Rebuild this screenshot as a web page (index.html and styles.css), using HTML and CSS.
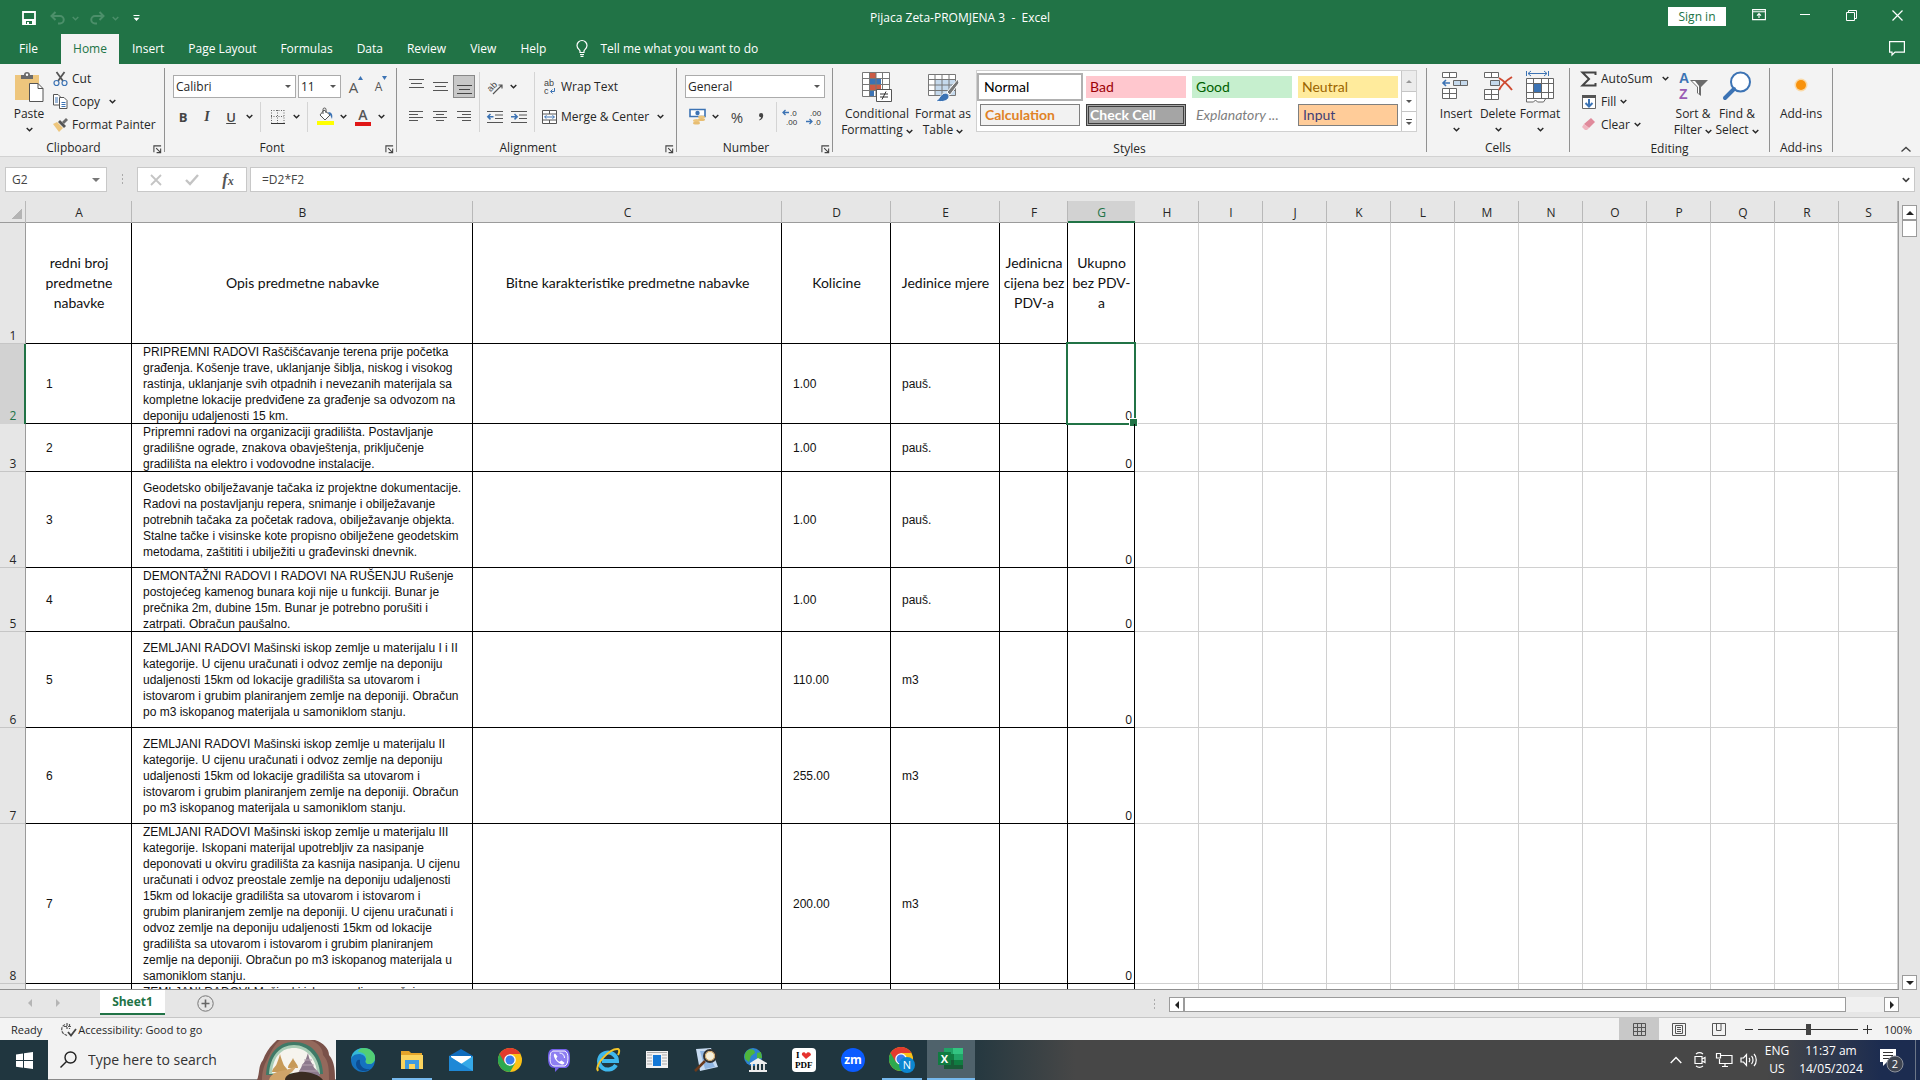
FILE: index.html
```html
<!DOCTYPE html>
<html lang="en">
  <head>
    <meta charset="UTF-8" />
    <meta name="viewport" content="width=device-width, initial-scale=1.0" />
    <title>Pijaca Zeta-PROMJENA 3 - Excel</title>
    <link rel="stylesheet" href="styles.css">
  </head>
  <body>
    <svg class="defs" width="0" height="0" aria-hidden="true">
      <symbol id="chev" viewBox="0 0 7 5"><path d="M0.7 0.9 3.5 3.7 6.3 0.9" fill="none" stroke="currentColor" stroke-width="1.4"/></symbol>
      <symbol id="launch" viewBox="0 0 10 10"><path d="M1 8V1h8M3.500 3.500 8 8M8.500 4v4.500H4" fill="none" stroke="#444" stroke-width="1.200"/></symbol>
      <symbol id="chrome" viewBox="0 0 24 24">
        <circle cx="12" cy="12" r="12" fill="#fbc116"/>
        <path d="M12 12 1.600 6A12 12 0 0 0 12 24l5.200-9z" fill="#2da94f"/>
        <path d="M1.600 6a12 12 0 0 1 20.800 0H12L6.800 15z" fill="#e33b2e"/>
        <circle cx="12" cy="12" r="5.800" fill="#fff"/>
        <circle cx="12" cy="12" r="4.500" fill="#3b7ded"/>
      </symbol>
    </svg>

    <div class="window">
      <header class="titlebar">
        <div class="quick">
          <button aria-label="Save"><svg width="14" height="14" viewBox="0 0 14 14"><path d="M1 1h12v12H1z" fill="none" stroke="#fff" stroke-width="1.800"/><path d="M1 8h12v5H1z" fill="#fff"/><path d="M4 10h6v3H4z" fill="#217346"/><path d="M5 11h2v2H5z" fill="#fff"/></svg></button>
          <button class="faded" aria-label="Undo"><svg width="15" height="14" viewBox="0 0 15 14"><path d="M5.500 1 1.500 5l4 4M1.500 5H10a3.700 3.700 0 0 1 0 7.500H8" fill="none" stroke="#4c8f6a" stroke-width="2"/></svg><svg width="7" height="5"><use href="#chev"/></svg></button>
          <button class="faded" aria-label="Redo"><svg width="15" height="14" viewBox="0 0 15 14"><path d="M9.500 1l4 4-4 4M13.500 5H5a3.700 3.700 0 0 0 0 7.500h2" fill="none" stroke="#4c8f6a" stroke-width="2"/></svg><svg width="7" height="5"><use href="#chev"/></svg></button>
          <button aria-label="Customize Quick Access Toolbar"><svg width="7" height="7" viewBox="0 0 7 7"><path d="M0.500 0h6v1h-6zM0.500 2.800h6L3.500 6z" fill="#fff"/></svg></button>
        </div>
        <h1>Pijaca Zeta-PROMJENA 3&nbsp; -&nbsp; Excel</h1>
        <div class="caption">
          <button class="signin">Sign in</button>
          <button aria-label="Ribbon Display Options"><svg width="14" height="12" viewBox="0 0 14 12"><path d="M.6.600h12.800v10H.6zM.6 2.800h12.800M7 9V5M5 6.600 7 4.600l2 2" fill="none" stroke="#fff" stroke-width="1.100"/></svg></button>
          <button aria-label="Minimize"><svg width="10" height="10" viewBox="0 0 10 10"><path d="M0 4.500h10" stroke="#fff"/></svg></button>
          <button aria-label="Restore"><svg width="11" height="11" viewBox="0 0 11 11"><path d="M.5 2.500h8v8h-8zM2.500 2.500v-2h8v8h-2" fill="none" stroke="#fff"/></svg></button>
          <button aria-label="Close"><svg width="11" height="11" viewBox="0 0 11 11"><path d="m.5.500 10 10m0-10-10 10" stroke="#fff" stroke-width="1.200"/></svg></button>
        </div>
      </header>

      <nav class="tabs">
        <button class="file">File</button>
        <button class="active">Home</button>
        <button>Insert</button>
        <button>Page Layout</button>
        <button>Formulas</button>
        <button>Data</button>
        <button>Review</button>
        <button>View</button>
        <button>Help</button>
        <button class="tell"><svg width="12" height="17" viewBox="0 0 12 17"><path d="M4 12.500V11C3.500 9.500 1 8.500 1 5.500a5 5 0 0 1 10 0c0 3-2.500 4-3 5.500v1.500zM4 14.500h4M4.500 16.300h3" fill="none" stroke="#fff" stroke-width="1.200"/></svg>Tell me what you want to do</button>
        <button class="comment" aria-label="Comments"><svg width="16" height="15" viewBox="0 0 16 15"><path d="M.6.600h14.800v10.500H6L3 14v-2.900H.6z" fill="none" stroke="#fff" stroke-width="1.200"/></svg></button>
      </nav>

      <section class="ribbon">
        <div class="group clipboard">
          <div class="tools">
            <button class="big"><svg width="30" height="32" viewBox="0 0 30 32"><path d="M1 4h24v25H1z" fill="#eec67d"/><path d="M7 8V4h3a3 3 0 0 1 6 0h3v4z" fill="#6b6b6b"/><circle cx="13" cy="3.800" r="1.200" fill="#fff"/><path d="M15.500 12.500h8.500l5 5v13H15.500z" fill="#fff" stroke="#555"/><path d="M24 12.500v5h5" fill="none" stroke="#555"/></svg><span>Paste</span><svg width="7" height="5"><use href="#chev"/></svg></button>
            <div class="stack">
              <button><svg width="15" height="16" viewBox="0 0 15 16"><path d="M3.500 1 10 10M11.500 1 5 10" stroke="#555" stroke-width="1.800"/><circle cx="3.500" cy="12" r="2.500" fill="none" stroke="#3c73b4" stroke-width="1.200"/><circle cx="11.500" cy="12" r="2.500" fill="none" stroke="#3c73b4" stroke-width="1.200"/></svg>Cut</button>
              <button><svg width="15" height="15" viewBox="0 0 15 15"><path d="M.5.500H5l2.500 2.500v8h-7z" fill="#fff" stroke="#555"/><path d="M6.500 3.500H11l3 3v8H6.500z" fill="#fff" stroke="#555"/><path d="M2 4h3M2 6h3M2 8h3M8.500 8.500h4M8.500 10.500h4M8.500 12.500h4" stroke="#3c73b4"/></svg>Copy<svg class="gap" width="7" height="5"><use href="#chev"/></svg></button>
              <button><svg width="15" height="14" viewBox="0 0 15 14"><path d="M0 6l4-2 6 6-4 4z" fill="#eec67d"/><path d="m5 4 2-2 6 6-2 2z" fill="#555"/><path d="m9 4 4-4 2 2-4 4z" fill="#6b6b6b"/></svg>Format Painter</button>
            </div>
          </div>
          <div class="caption-row launch">Clipboard<button aria-label="Clipboard options"><svg width="9" height="9"><use href="#launch"/></svg></button></div>
        </div>

        <div class="group font">
          <div class="tools rows">
            <div class="row">
              <span class="combo wide"><select aria-label="Font"><option>Calibri</option></select></span>
              <span class="combo small"><select aria-label="Font size"><option>11</option></select></span>
              <button class="ic grow" aria-label="Increase font size">A<svg width="5" height="4" viewBox="0 0 5 4"><path d="M0 4h5L2.500 0z" fill="#3c73b4"/></svg></button>
              <button class="ic shrink" aria-label="Decrease font size">A<svg width="5" height="4" viewBox="0 0 5 4"><path d="M0 0h5L2.500 4z" fill="#3c73b4"/></svg></button>
            </div>
            <div class="row letters">
              <button class="ic letter"><b>B</b></button>
              <button class="ic letter"><i>I</i></button>
              <button class="ic letter"><u>U</u></button>
              <button class="dd" aria-label="Underline style"><svg width="7" height="5"><use href="#chev"/></svg></button>
              <span class="sep"></span>
              <button class="ic" aria-label="Borders"><svg width="14" height="14" viewBox="0 0 14 14"><path d="M.5 0v13M6.500 0v13M13 0v13M0 .5h13M0 6.500h13" stroke="#666" stroke-dasharray="1 1.500"/><path d="M0 13.500h14" stroke="#333"/></svg></button>
              <button class="dd" aria-label="Border style"><svg width="7" height="5"><use href="#chev"/></svg></button>
              <span class="sep"></span>
              <button class="ic" aria-label="Fill color"><svg width="17" height="17" viewBox="0 0 17 17"><path d="m7 2 6 5-5 5-5-5z" fill="#fff" stroke="#555"/><path d="M6 6V1.500a1.300 1.300 0 0 1 3 0V5" fill="none" stroke="#555"/><path d="M11 4c4 0 5 3 4 7-1-2-1-3-2-4z" fill="#3c73b4"/><path d="M0 13h17v4H0z" fill="#ff0"/></svg></button>
              <button class="dd" aria-label="Fill colors"><svg width="7" height="5"><use href="#chev"/></svg></button>
              <button class="ic fcolor" aria-label="Font color"><span>A</span></button>
              <button class="dd" aria-label="Font colors"><svg width="7" height="5"><use href="#chev"/></svg></button>
            </div>
          </div>
          <div class="caption-row launch">Font<button aria-label="Font options"><svg width="9" height="9"><use href="#launch"/></svg></button></div>
        </div>

        <div class="group alignment">
          <div class="tools rows">
            <div class="row">
              <button class="ic" aria-label="Top align"><svg width="15" height="15" viewBox="0 0 15 15"><path d="M0 .5h15M2 4.500h11M0 8.500h15" stroke="#555"/></svg></button>
              <button class="ic" aria-label="Middle align"><svg width="15" height="15" viewBox="0 0 15 15"><path d="M0 3.500h15M2 7.500h11M0 11.500h15" stroke="#555"/></svg></button>
              <button class="ic pressed" aria-label="Bottom align"><svg width="15" height="15" viewBox="0 0 15 15"><path d="M0 6.500h15M2 10.500h11M0 14.500h15" stroke="#444"/></svg></button>
              <span class="sep"></span>
              <button class="ic" aria-label="Orientation"><svg width="17" height="16" viewBox="0 0 17 16"><text x="1" y="11" class="ab" transform="rotate(-45 5 9)">ab</text><path d="m6 15 9-9m-3.500 0H15v3.500" fill="none" stroke="#555" stroke-width="1.200"/></svg></button>
              <button class="dd" aria-label="Orientation options"><svg width="7" height="5"><use href="#chev"/></svg></button>
              <span class="sep late"></span>
              <button class="wrap"><svg width="16" height="16" viewBox="0 0 16 16"><text x="2" y="7" class="ab">ab</text><text x="2" y="15" class="ab">c</text><path d="M12.500 9v3.500H9M10.500 10.500l-2 2 2 2" fill="none" stroke="#3c73b4"/></svg>Wrap Text</button>
            </div>
            <div class="row">
              <button class="ic" aria-label="Align left"><svg width="15" height="15" viewBox="0 0 15 15"><path d="M0 2.500h14M0 5.500h9M0 8.500h14M0 11.500h9" stroke="#555"/></svg></button>
              <button class="ic" aria-label="Center"><svg width="15" height="15" viewBox="0 0 15 15"><path d="M0 2.500h14M3 5.500h8M0 8.500h14M3 11.500h8" stroke="#555"/></svg></button>
              <button class="ic" aria-label="Align right"><svg width="15" height="15" viewBox="0 0 15 15"><path d="M0 2.500h14M5 5.500h9M0 8.500h14M5 11.500h9" stroke="#555"/></svg></button>
              <span class="sep"></span>
              <button class="ic" aria-label="Decrease indent"><svg width="16" height="14" viewBox="0 0 16 14"><path d="M0 1.500h16M8 5h8M8 8.500h8M0 12.500h16" stroke="#555"/><path d="M6.500 6.700h-6M3.500 4 .8 6.700l2.700 2.700" fill="none" stroke="#3c73b4" stroke-width="1.500"/></svg></button>
              <button class="ic" aria-label="Increase indent"><svg width="16" height="14" viewBox="0 0 16 14"><path d="M0 1.500h16M8 5h8M8 8.500h8M0 12.500h16" stroke="#555"/><path d="M0 6.700h6M3.500 4l2.700 2.700-2.700 2.700" fill="none" stroke="#3c73b4" stroke-width="1.500"/></svg></button>
              <span class="sep"></span>
              <button class="wrap"><svg width="16" height="16" viewBox="0 0 16 16"><path d="M.5 1.500h14v13H.5zM.5 5h14M.5 11h14M7.500 1.500V5M7.500 11v3.500" fill="#fff" stroke="#555"/><path d="M2.500 8h10M4.500 6.200 2.700 8l1.800 1.800M10.500 6.200 12.300 8l-1.800 1.800" fill="none" stroke="#3c73b4"/></svg>Merge &amp; Center<svg class="gap" width="7" height="5"><use href="#chev"/></svg></button>
            </div>
          </div>
          <div class="caption-row launch">Alignment<button aria-label="Alignment options"><svg width="9" height="9"><use href="#launch"/></svg></button></div>
        </div>

        <div class="group number">
          <div class="tools rows">
            <div class="row"><span class="combo full"><select aria-label="Number format"><option>General</option></select></span></div>
            <div class="row">
              <button class="ic" aria-label="Accounting format"><svg width="17" height="17" viewBox="0 0 17 17"><path d="M1 1.500h15v7H1z" fill="#fff" stroke="#3c73b4" stroke-width="1.600"/><circle cx="8.500" cy="5" r="2.200" fill="#3c73b4"/><ellipse cx="12.500" cy="9" rx="3.500" ry="1.600" fill="#eec67d"/><ellipse cx="12.500" cy="11.500" rx="3.500" ry="1.600" fill="#e7bd72"/><ellipse cx="7.500" cy="12.500" rx="3.500" ry="1.600" fill="#eec67d"/><ellipse cx="7.500" cy="15" rx="3.500" ry="1.600" fill="#e7bd72"/></svg></button>
              <button class="dd" aria-label="Accounting formats"><svg width="7" height="5"><use href="#chev"/></svg></button>
              <button class="ic percent">%</button>
              <button class="ic" aria-label="Comma style"><svg width="6" height="8" viewBox="0 0 6 8"><path d="M1 2.200a2 2 0 0 1 4.200 0C5.200 5 3.500 6.800 1.300 7.500V6.600C2.500 6 3 5.200 3 4.300A2 2 0 0 1 1 2.200z" fill="#444"/></svg></button>
              <span class="sep"></span>
              <button class="ic" aria-label="Increase decimal"><svg width="16" height="16" viewBox="0 0 16 16"><path d="M7 3.500H1M3.500 1 1 3.500 3.500 6" fill="none" stroke="#3c73b4" stroke-width="1.300"/><text x="8" y="7" class="dec">.0</text><text x="4" y="16" class="dec">.00</text></svg></button>
              <button class="ic" aria-label="Decrease decimal"><svg width="16" height="16" viewBox="0 0 16 16"><path d="M0 12.500h6M3.500 10 6 12.500 3.500 15" fill="none" stroke="#3c73b4" stroke-width="1.300"/><text x="4" y="7" class="dec">.00</text><text x="8" y="16" class="dec">.0</text></svg></button>
            </div>
          </div>
          <div class="caption-row launch">Number<button aria-label="Number options"><svg width="9" height="9"><use href="#launch"/></svg></button></div>
        </div>

        <div class="group styles">
          <div class="tools">
            <button class="big w66"><svg width="30" height="32" viewBox="0 0 30 32"><path d="M.5 1.500h27v24H.5z" fill="#fff"/><path d="M8 2h6v6H8zM8 14h11v6H8z" fill="#cc5b45"/><path d="M8 8h11v6H8zM8 20h4v5.500H8z" fill="#3c73b4"/><path d="M.5 1.500h27v24H.5zM.5 7.500h27M.5 13.500h27M.5 19.500h27M7.500 1.500v24M14 1.500v24M20.500 1.500v24" fill="none" stroke="#777"/><path d="M14.500 18.500h15v12h-15z" fill="#fff" stroke="#555"/><path d="M18 23h8M18 26h8M24 20.500l-4 8" stroke="#333"/></svg><span>Conditional<br>Formatting <svg width="7" height="5"><use href="#chev"/></svg></span></button>
            <button class="big w66"><svg width="31" height="32" viewBox="0 0 31 32"><path d="M.5 3.500h27v21H.5z" fill="#fff"/><path d="M7 9h20v15H7z" fill="#c5d9ec"/><path d="M.5 3.500h27v21H.5zM.5 8.500h27M.5 14h27M.5 19.500h27M7 3.500v21M14 3.500v21M21 3.500v21" fill="none" stroke="#777"/><path d="m30 8-11 13 3 3 9-12z" fill="#777" stroke="#fff"/><path d="M8 30c4-2 4-7 9-8 4 0 5 4 3 6-3 3-8 3-12 2z" fill="#3c73b4" stroke="#fff"/></svg><span>Format as<br>Table <svg width="7" height="5"><use href="#chev"/></svg></span></button>
            <div class="gallery">
              <div class="swatches">
                <button class="normal">Normal</button>
                <button class="bad">Bad</button>
                <button class="good">Good</button>
                <button class="neutral">Neutral</button>
                <button class="calc">Calculation</button>
                <button class="check">Check Cell</button>
                <button class="expl">Explanatory ...</button>
                <button class="input">Input</button>
              </div>
              <div class="spin">
                <button class="off" aria-label="Previous styles"><i class="tri up"></i></button>
                <button aria-label="Next styles"><i class="tri"></i></button>
                <button class="more" aria-label="More styles"><i class="tri"></i></button>
              </div>
            </div>
          </div>
          <div class="caption-row">Styles</div>
        </div>

        <div class="group cells">
          <div class="tools">
            <button class="big w42"><svg width="30" height="32" viewBox="0 0 30 32"><path d="M1.500 1.500h14v5h-14zM8.500 1.500v5M1.500 17.500h14v10h-14zM8.500 17.500v10M1.500 22.500h14" fill="#fff" stroke="#666"/><path d="M12.500 9.500h14v5h-14z" fill="#c5d9ec" stroke="#666"/><path d="M19.500 9.500v5" stroke="#666"/><path d="M9 12H2M5 9l-3 3 3 3" fill="none" stroke="#3c73b4" stroke-width="1.600"/></svg><span>Insert</span><svg width="7" height="5"><use href="#chev"/></svg></button>
            <button class="big w42"><svg width="30" height="32" viewBox="0 0 30 32"><path d="M1.500 1.500h14v5h-14zM8.500 1.500v5M1.500 18.500h14v10h-14zM8.500 18.500v10M1.500 23.500h14" fill="#fff" stroke="#666"/><path d="M7.500 9.500h9v5h-9z" fill="#c5d9ec" stroke="#666"/><path d="M16 7c5 3 9 7 13 12M29 6c-5 3-10 7-13 13" fill="none" stroke="#cf4b32" stroke-width="2"/></svg><span>Delete</span><svg width="7" height="5"><use href="#chev"/></svg></button>
            <button class="big w42"><svg width="30" height="32" viewBox="0 0 30 32"><path d="M1.500 0v5M23.500 0v5M3 2.500h19M6 0 3 2.500 6 5M19 0l3 2.500L19 5" fill="none" stroke="#3c73b4"/><path d="M1.500 7.500h27v20h-27zM1.500 12.500h27M1.500 21.500h27M8.500 7.500v20M16.500 7.500v20M23.500 7.500v20" fill="#fff" stroke="#666"/><path d="M9 13h7v8H9z" fill="#3c73b4"/><path d="M1.500 28v3h7l2-2 2 2h6l2-3" fill="#fff" stroke="#666"/></svg><span>Format</span><svg width="7" height="5"><use href="#chev"/></svg></button>
          </div>
          <div class="caption-row">Cells</div>
        </div>

        <div class="group editing">
          <div class="tools">
            <div class="stack">
              <button><svg width="16" height="16" viewBox="0 0 16 16"><path d="M14.500 4V1.500h-13L8 8l-6.500 6.500h13V12" fill="none" stroke="#444" stroke-width="2"/></svg>AutoSum<svg class="gap" width="7" height="5"><use href="#chev"/></svg></button>
              <button><svg width="16" height="16" viewBox="0 0 16 16"><path d="M1.500 1.500h13v13h-13z" fill="#fff" stroke="#666"/><path d="M1 1h14v3H1z" fill="#555"/><path d="M8 5v7.500M4.500 9 8 12.500 11.500 9" fill="none" stroke="#3c73b4" stroke-width="2"/></svg>Fill<svg width="7" height="5"><use href="#chev"/></svg></button>
              <button><svg width="16" height="16" viewBox="0 0 16 16"><path d="m10 1 4 4-6 6-5-4z" fill="#e08a9b"/><path d="m3 7 5 4-2 2H4l-3-3z" fill="#f0b6c0"/></svg>Clear<svg width="7" height="5"><use href="#chev"/></svg></button>
            </div>
            <button class="big w44"><svg width="30" height="32" viewBox="0 0 30 32"><text x="1" y="12" class="az" fill="#3c73b4">A</text><text x="1" y="28" class="az" fill="#9a5cb4">Z</text><path d="M12 9h18l-7 7v9l-4-3v-6z" fill="#6b6b6b"/><path d="m14 10 6 6v6l1 1V15l-4-5z" fill="#fff"/></svg><span>Sort &amp;<br>Filter <svg width="7" height="5"><use href="#chev"/></svg></span></button>
            <button class="big w44"><svg width="30" height="32" viewBox="0 0 30 32"><circle cx="18.500" cy="11" r="9.500" fill="#fff" stroke="#3c73b4" stroke-width="2"/><path d="M12 18 3 27" stroke="#3c73b4" stroke-width="4" stroke-linecap="round"/></svg><span>Find &amp;<br>Select <svg width="7" height="5"><use href="#chev"/></svg></span></button>
          </div>
          <div class="caption-row">Editing</div>
        </div>

        <div class="group addins">
          <div class="tools">
            <button class="big w62"><svg width="30" height="32" viewBox="0 0 30 32"><circle cx="15" cy="14" r="6.500" fill="#fbd9a5"/><circle cx="15" cy="14" r="5" fill="#f8920c"/></svg><span>Add-ins</span></button>
          </div>
          <div class="caption-row">Add-ins</div>
        </div>
        <button class="collapse" aria-label="Collapse the Ribbon"><svg width="10" height="6" viewBox="0 0 10 6"><path d="m.5 5.500 4.500-4 4.500 4" fill="none" stroke="#444" stroke-width="1.400"/></svg></button>
      </section>

      <div class="formulabar">
        <div class="namebox"><input type="text" aria-label="Name Box" value="G2"><i class="tri"></i></div>
        <span class="dots"></span>
        <div class="fx">
          <button aria-label="Cancel"><svg width="12" height="12" viewBox="0 0 12 12"><path d="m1 1 10 10m0-10L1 11" stroke="#c4c4c4" stroke-width="1.800"/></svg></button>
          <button aria-label="Enter"><svg width="14" height="12" viewBox="0 0 14 12"><path d="m1 6 4 4 8-9" fill="none" stroke="#c4c4c4" stroke-width="2.400"/></svg></button>
          <button class="fn" aria-label="Insert Function"><i>f<small>x</small></i></button>
        </div>
        <div class="formula"><input type="text" aria-label="Formula Bar" value="=D2*F2"><svg width="8" height="6" viewBox="0 0 7 5"><use href="#chev"/></svg></div>
      </div>

      <main class="sheet">
        <div class="viewport">
          <table>
            <colgroup>
              <col class="c-head"><col class="c-a"><col class="c-b"><col class="c-c"><col class="c-d"><col class="c-d"><col class="c-f"><col class="c-g">
              <col class="c-x" span="11"><col>
            </colgroup>
            <thead>
              <tr>
                <th class="corner"></th><th>A</th><th>B</th><th>C</th><th>D</th><th>E</th><th>F</th><th class="sel">G</th><th>H</th><th>I</th><th>J</th><th>K</th><th>L</th><th>M</th><th>N</th><th>O</th><th>P</th><th>Q</th><th>R</th><th>S</th>
              </tr>
            </thead>
            <tbody>
              <tr class="head">
                <th>1</th><td>redni broj<br>predmetne<br>nabavke</td><td>Opis predmetne nabavke</td><td>Bitne karakteristike predmetne nabavke</td><td>Kolicine</td><td>Jedinice mjere</td><td>Jedinicna<br>cijena bez<br>PDV-a</td><td>Ukupno<br>bez PDV-<br>a</td>
                <td></td><td></td><td></td><td></td><td></td><td></td><td></td><td></td><td></td><td></td><td></td><td></td>
              </tr>
              <tr class="l5">
                <th class="sel">2</th><td>1</td><td>PRIPREMNI RADOVI Raščišćavanje terena prije početka<br>građenja. Košenje trave, uklanjanje šiblja, niskog i visokog<br>rastinja, uklanjanje svih otpadnih i nevezanih materijala sa<br>kompletne lokacije predviđene za građenje sa odvozom na<br>deponiju udaljenosti 15 km.</td><td></td><td>1.00</td><td>pauš.</td><td></td><td class="cursor">0</td>
                <td></td><td></td><td></td><td></td><td></td><td></td><td></td><td></td><td></td><td></td><td></td><td></td>
              </tr>
              <tr class="l3">
                <th>3</th><td>2</td><td>Pripremni radovi na organizaciji gradilišta. Postavljanje<br>gradilišne ograde, znakova obavještenja, priključenje<br>gradilišta na elektro i vodovodne instalacije.</td><td></td><td>1.00</td><td>pauš.</td><td></td><td>0</td>
                <td></td><td></td><td></td><td></td><td></td><td></td><td></td><td></td><td></td><td></td><td></td><td></td>
              </tr>
              <tr class="l6">
                <th>4</th><td>3</td><td>Geodetsko obilježavanje tačaka iz projektne dokumentacije.<br>Radovi na postavljanju repera, snimanje i obilježavanje<br>potrebnih tačaka za početak radova, obilježavanje objekta.<br>Stalne tačke i visinske kote propisno obilježene geodetskim<br>metodama, zaštititi i ubilježiti u građevinski dnevnik.</td><td></td><td>1.00</td><td>pauš.</td><td></td><td>0</td>
                <td></td><td></td><td></td><td></td><td></td><td></td><td></td><td></td><td></td><td></td><td></td><td></td>
              </tr>
              <tr class="l4">
                <th>5</th><td>4</td><td>DEMONTAŽNI RADOVI I RADOVI NA RUŠENJU Rušenje<br>postojećeg kamenog bunara koji nije u funkciji. Bunar je<br>prečnika 2m, dubine 15m. Bunar je potrebno porušiti i<br>zatrpati. Obračun paušalno.</td><td></td><td>1.00</td><td>pauš.</td><td></td><td>0</td>
                <td></td><td></td><td></td><td></td><td></td><td></td><td></td><td></td><td></td><td></td><td></td><td></td>
              </tr>
              <tr class="l6">
                <th>6</th><td>5</td><td>ZEMLJANI RADOVI Mašinski iskop zemlje u materijalu I i II<br>kategorije. U cijenu uračunati i odvoz zemlje na deponiju<br>udaljenosti 15km od lokacije gradilišta sa utovarom i<br>istovarom i grubim planiranjem zemlje na deponiji. Obračun<br>po m3 iskopanog materijala u samoniklom stanju.</td><td></td><td>110.00</td><td>m3</td><td></td><td>0</td>
                <td></td><td></td><td></td><td></td><td></td><td></td><td></td><td></td><td></td><td></td><td></td><td></td>
              </tr>
              <tr class="l6">
                <th>7</th><td>6</td><td>ZEMLJANI RADOVI Mašinski iskop zemlje u materijalu II<br>kategorije. U cijenu uračunati i odvoz zemlje na deponiju<br>udaljenosti 15km od lokacije gradilišta sa utovarom i<br>istovarom i grubim planiranjem zemlje na deponiji. Obračun<br>po m3 iskopanog materijala u samoniklom stanju.</td><td></td><td>255.00</td><td>m3</td><td></td><td>0</td>
                <td></td><td></td><td></td><td></td><td></td><td></td><td></td><td></td><td></td><td></td><td></td><td></td>
              </tr>
              <tr class="l10">
                <th>8</th><td>7</td><td>ZEMLJANI RADOVI Mašinski iskop zemlje u materijalu III<br>kategorije. Iskopani materijal upotrebljiv za nasipanje<br>deponovati u okviru gradilišta za kasnija nasipanja. U cijenu<br>uračunati i odvoz preostale zemlje na deponiju udaljenosti<br>15km od lokacije gradilišta sa utovarom i istovarom i<br>grubim planiranjem zemlje na deponiji. U cijenu uračunati i<br>odvoz zemlje na deponiju udaljenosti 15km od lokacije<br>gradilišta sa utovarom i istovarom i grubim planiranjem<br>zemlje na deponiji. Obračun po m3 iskopanog materijala u<br>samoniklom stanju.</td><td></td><td>200.00</td><td>m3</td><td></td><td>0</td>
                <td></td><td></td><td></td><td></td><td></td><td></td><td></td><td></td><td></td><td></td><td></td><td></td>
              </tr>
              <tr class="l4">
                <th></th><td></td><td class="top">ZEMLJANI RADOVI Mašinski iskop zemlje sa ručnim</td><td></td><td></td><td></td><td></td><td></td>
                <td></td><td></td><td></td><td></td><td></td><td></td><td></td><td></td><td></td><td></td><td></td><td></td>
              </tr>
            </tbody>
          </table>
        </div>
        <div class="vscroll">
          <button aria-label="Scroll up"><i class="tri up"></i></button>
          <span class="thumb"></span>
          <button class="end" aria-label="Scroll down"><i class="tri"></i></button>
        </div>
      </main>

      <div class="sheetbar">
        <button class="arrow" aria-label="Previous sheet"><i class="tri left"></i></button>
        <button class="arrow" aria-label="Next sheet"><i class="tri right"></i></button>
        <button class="sheettab">Sheet1</button>
        <button class="new" aria-label="New sheet"><svg width="17" height="17" viewBox="0 0 17 17"><circle cx="8.500" cy="8.500" r="7.700" fill="none" stroke="#777"/><path d="M8.500 4.500v8M4.500 8.500h8" stroke="#666" stroke-width="1.600"/></svg></button>
        <span class="dots"></span>
        <div class="hscroll">
          <button aria-label="Scroll left"><i class="tri left"></i></button>
          <span class="thumb"></span>
          <button aria-label="Scroll right"><i class="tri right"></i></button>
        </div>
      </div>

      <footer class="status">
        <span class="ready">Ready</span>
        <button class="access"><svg width="17" height="15" viewBox="0 0 17 15"><path d="M5 2.500A5.500 5.500 0 0 0 4 12l3 1.500M7 1v6M4 4.500h8M9.500 2v5" fill="none" stroke="#555" stroke-width="1.200" stroke-dasharray="3 1"/><path d="m8 10 3 3.500L16 7" fill="none" stroke="#444" stroke-width="1.800"/></svg>Accessibility: Good to go</button>
        <div class="views">
          <button class="on" aria-label="Normal view"><svg width="13" height="13" viewBox="0 0 13 13"><path d="M.5.500h12v12H.5zM.5 4.500h12M.5 8.500h12M4.500.500v12M8.500.500v12" fill="none" stroke="#555"/></svg></button>
          <button aria-label="Page layout view"><svg width="14" height="13" viewBox="0 0 14 13"><path d="M.5.500h13v12H.5zM3.500 2.500h7v8h-7zM5 4.500h4M5 6.500h4M5 8.500h4" fill="none" stroke="#555"/></svg></button>
          <button aria-label="Page break view"><svg width="14" height="13" viewBox="0 0 14 13"><path d="M.5.500h13v12H.5zM4.500.500v7H9v-7" fill="none" stroke="#555"/></svg></button>
        </div>
        <div class="zoom">
          <button aria-label="Zoom out"><svg width="8" height="9" viewBox="0 0 8 9"><path d="M0 4.500h8" stroke="#333"/></svg></button>
          <input type="range" min="0" max="100" value="50" aria-label="Zoom">
          <button aria-label="Zoom in"><svg width="9" height="9" viewBox="0 0 9 9"><path d="M0 4.500h9M4.500 0v9" stroke="#333"/></svg></button>
          <span>100%</span>
        </div>
      </footer>

      <div class="taskbar">
        <button class="start" aria-label="Start"><svg width="17" height="17" viewBox="0 0 17 17"><path d="m0 2.400 7-1v6.700H0zM8 1.300 17 0v8.100H8zM0 9h7v6.700l-7-1zM8 9h9v8l-9-1.300z" fill="#fff"/></svg></button>
        <div class="search">
          <svg width="17" height="17" viewBox="0 0 17 17"><circle cx="10.500" cy="6.500" r="5.500" fill="none" stroke="#222" stroke-width="1.400"/><path d="m6.500 10.500-6 6" stroke="#222" stroke-width="1.400"/></svg>
          <input type="text" aria-label="Type here to search" placeholder="Type here to search">
          <svg width="79" height="39" viewBox="0 0 79 39">
            <path d="M0 40C3 33 1 26 6 20 8 14 12 8 16 4l4-4h38c9 3 14 9 14 15 6 7 6 17 6 25z" fill="#7a5149"/>
            <path d="M5 40c0-8 2-15 5-20C14 11 18 4 23 0h30c9 3 13 9 13 15 6 6 6 15 6 25z" fill="#94695c"/>
            <path d="M9 35C10 15 20 2 37 2s28 12 29 32z" fill="#3f7a67"/>
            <path d="M12 34C13 16 23 5 37 5s25 12 26 29z" fill="#a9cdb6"/>
            <path d="M15 33C16 16 25 8 37 8s22 10 23 25z" fill="#f6f4ee"/>
            <path d="M15 32c1-5 4-5 5-9 1-3 2-5 3-9 1 4 2 6 3 9 1 4 4 4 5 9zM31 28c0-4 3-5 5-10 2 5 5 6 5 10z" fill="#c79a58"/>
            <path d="M41 36c0-6 3-6 4-11 3-3 4-6 6-12 1 6 3 9 5 12 1 5 6 5 7 11z" fill="#8d7a8d"/>
            <path d="M45 25h12M47 20h8M42 31h19" stroke="#b5a3b0"/>
            <path d="M12 40c2-7 9-9 17-10l11-4-5 6c-5 3-5 6-5 8z" fill="#d0a469"/>
            <path d="M28 40c0-5 6-7 14-8 10-1 20 3 24 8z" fill="#3a2c22"/>
          </svg>
        </div>
        <div class="apps">
          <button aria-label="Edge"><svg width="24" height="24" viewBox="0 0 24 24"><circle cx="12" cy="12" r="12" fill="#1572bf"/><path d="M0 12A12 12 0 0 1 12 0c8 0 12 5 12 10 0 4-3 6-6 6s-4-2-3-4c0-4-4-6-7-6-5 0-8 3-8 6z" fill="#35b9d6"/><path d="M12 0c8 0 12 5 12 10 0 4-3 6-6 6s-4-2-3-4c1-6-4-8-8-8 1-3 3-4 5-4z" fill="#52cf74"/><path d="M9 12c-1 6 4 10 10 9-5 4-14 2-14-5 0-3 2-5 4-4z" fill="#0d4d92"/></svg></button>
          <button class="run" aria-label="File Explorer"><svg width="24" height="24" viewBox="0 0 24 24"><path d="M1 3h8l2 2h11v16H1z" fill="#e5a52a"/><path d="M1 7h22v14H1z" fill="#fbd45e"/><path d="M5 12h14v9H5z" fill="#3f9be0"/><path d="M9 16h6v5H9z" fill="#fbd45e"/></svg></button>
          <button aria-label="Mail"><svg width="26" height="24" viewBox="0 0 26 24"><path d="M1 8 13 1l12 7v15H1z" fill="#0f6cbd"/><path d="M3 8h20v8H3z" fill="#fff"/><path d="m1 8 12 8 12-8v15H1z" fill="#35a9e8"/><path d="m1 8 24 15H1z" fill="#1e88d6"/><path d="M4 8h18l-9 7z" fill="#fff"/></svg></button>
          <button aria-label="Chrome"><svg width="24" height="24"><use href="#chrome"/></svg></button>
          <button aria-label="Viber"><svg width="24" height="24" viewBox="0 0 24 24"><path d="M5 1h14c3 1 4 3 4 9s-1 9-4 10h-7l-4 4v-4c-5 0-7-3-7-10 0-6 1-8 4-9z" fill="#7360e8"/><path d="M6 3h12c2 1 3 3 3 7s-1 7-3 8H7c-3-1-4-3-4-8s1-6 3-7z" fill="#8e7ff2" stroke="#fff"/><path d="m8 5.500 2.500 3-1.300 2c.8 1.500 1.800 2.500 3.300 3.300l2-1.300 3 2.200c-.5 1.500-1.800 2-3 1.500C11 15 8 12 7 8.500c-.3-1.200-.2-2.300 1-3z" fill="#fff"/><path d="M12.500 5c3 0 5 2 5 5" fill="none" stroke="#fff"/></svg></button>
          <button aria-label="Internet Explorer"><svg width="24" height="24" viewBox="0 0 24 24"><path d="M20 17a9 8.500 0 1 1 1-4H6" fill="none" stroke="#3eb7ec" stroke-width="4"/><path d="M2 23C-2 17 14 0 22 1c2 1 1 4 0 6" fill="none" stroke="#f2c52b" stroke-width="2"/></svg></button>
          <button aria-label="Reader"><svg width="22" height="18" viewBox="0 0 22 18"><path d="M0 0h22v17H0z" fill="#f2f2f2"/><path d="M1 4h5M1 7h5M1 10h5M1 13h5M16 4h5M16 7h5M16 10h5M16 13h5M1 1.500h20" stroke="#aaa"/><path d="M7 4h8v11H7z" fill="#1478d6"/></svg></button>
          <button aria-label="Document search"><svg width="26" height="24" viewBox="0 0 26 24"><path d="M3 1 18 0l7 19-18 4z" fill="#c8dcf2"/><path d="m7 3 7 0 8 16-10 2z" fill="#8fb5e2"/><circle cx="17" cy="8" r="6" fill="#f4efdc" stroke="#333" stroke-width="2"/><circle cx="17" cy="8" r="4.500" fill="none" stroke="#d8a860"/><path d="m12 13-10 10" stroke="#6b3a1c" stroke-width="2.500"/></svg></button>
          <button aria-label="Network bank"><svg width="25" height="24" viewBox="0 0 25 24"><circle cx="10" cy="9" r="9" fill="#2d83d2"/><path d="M5 2c4-2 7 0 7 3L8 8 6 14 2 11C1 7 2 4 5 2zM14 5l4-1 1 6-5 1z" fill="#4fb53c"/><path d="m7 15 8-5 9 5v1H7zM6 22h18v2H6z" fill="#eee"/><path d="M9 16v6M13 16v6M17 16v6M21 16v6" stroke="#ddd" stroke-width="2"/></svg></button>
          <button aria-label="I Love PDF"><svg width="24" height="24" viewBox="0 0 24 24"><rect width="24" height="24" rx="4" fill="#fff"/><text x="4" y="10" class="pdf">I</text><text x="3" y="20" class="pdf">PDF</text><path d="m14 11-4-4c-1-3 3-4 4-1 1-3 5-2 5 1z" fill="#e5322d"/></svg></button>
          <button aria-label="Zoom meetings"><svg width="24" height="24" viewBox="0 0 24 24"><circle cx="12" cy="12" r="12" fill="#0b5cff"/><text x="12" y="16" text-anchor="middle" class="zm">zm</text></svg></button>
          <button class="run" aria-label="Chrome profile"><svg width="26" height="26" viewBox="0 0 26 26"><use href="#chrome" width="24" height="24"/><circle cx="18" cy="18" r="8" fill="#0c86d0"/><text x="18" y="22" text-anchor="middle" class="nn">N</text></svg></button>
          <button class="current" aria-label="Excel"><svg width="26" height="24" viewBox="0 0 26 24"><path d="M6 1h19v21H6z" fill="#21a366"/><path d="M15 1h10v6H15z" fill="#33c481"/><path d="M6 7h10v6H6z" fill="#107c41"/><path d="M6 13h19v9H6z" fill="#185c37"/><path d="M16 13h9v5h-9z" fill="#107c41"/><path d="M0 5h13v13H0z" fill="#107c41"/><text x="6.500" y="16" text-anchor="middle" class="xx">X</text></svg></button>
        </div>
        <div class="tray">
          <button aria-label="Show hidden icons"><svg width="12" height="8" viewBox="0 0 12 8"><path d="m.7 7 5.300-5.500L11.300 7" fill="none" stroke="#fff" stroke-width="1.400"/></svg></button>
          <button aria-label="Meet Now"><svg width="12" height="16" viewBox="0 0 12 16"><path d="M1 4.500h7v7H1zM8 7l3-1.500v5L8 9M2 2c2-1.500 5-1.500 7 0M2 14c2 1.500 5 1.500 7 0" fill="none" stroke="#fff" stroke-width="1.200"/></svg></button>
          <button aria-label="Network"><svg width="17" height="14" viewBox="0 0 17 14"><path d="M5 2.500h11v8H3.500V6M6 13.500h6M9 10.500v3M.5.500h4V5h-4z" fill="none" stroke="#fff" stroke-width="1.200"/></svg></button>
          <button aria-label="Volume"><svg width="17" height="14" viewBox="0 0 17 14"><path d="M1 5h2.500l3-3.500v11L3.500 9H1zM9 5c1 1 1 3 0 4M11.500 3c2 2 2 6 0 8M14 1c3 3 3 9 0 12" fill="none" stroke="#fff" stroke-width="1.200"/></svg></button>
          <button class="lang">ENG<br>US</button>
          <button class="clock">11:37 am<br>14/05/2024</button>
          <button class="notes" aria-label="Notifications"><svg width="26" height="26" viewBox="0 0 26 26"><path d="M1 2h16v13H8l-4 4v-4H1z" fill="#fff"/><path d="M4 5.500h10M4 8.500h10M4 11.500h6" stroke="#333"/><circle cx="16" cy="17" r="8" fill="#3e4450" stroke="#8d929c"/><text x="16" y="21" text-anchor="middle" class="nn">2</text></svg></button>
        </div>
      </div>
    </div>
  </body>
</html>
```
FILE: styles.css
```css
* {
  box-sizing: border-box;
}

body {
  margin: 0;
  font-family: "Open Sans", "Noto Sans", sans-serif;
  font-size: 12px;
  color: #262626;
}

button,
input,
select {
  font: inherit;
  color: inherit;
  border: none;
  background: none;
  padding: 0;
  margin: 0;
}

button {
  display: flex;
  align-items: center;
  justify-content: center;
  white-space: nowrap;
}

svg {
  flex: none;
  overflow: visible;
}

.defs {
  position: absolute;
}

.window {
  display: flex;
  flex-direction: column;
  height: 100vh;
  overflow: hidden;
  background: #e6e6e6;
}

/* title bar */
.titlebar {
  display: grid;
  grid-template-columns: 1fr auto 1fr;
  height: 34px;
  background: #217346;
  color: #fff;
}

.titlebar h1 {
  margin: 0;
  font-size: 12px;
  font-weight: 400;
  line-height: 36px;
}

.quick {
  display: flex;
  gap: 14px;
  padding-left: 22px;
}

.quick button {
  gap: 7px;
}

.quick button + button + button {
  margin-left: -3px;
}

.quick button:last-child {
  margin-left: 0;
}

.faded {
  color: #4c8f6a;
}

.caption {
  display: flex;
  justify-content: flex-end;
}

.caption button {
  width: 46px;
  height: 30px;
}

.caption .signin {
  width: 58px;
  height: 19px;
  margin: 7px 10px 0 0;
  background: #fff;
  color: #217346;
}

/* ribbon tabs */
.tabs {
  display: flex;
  height: 30px;
  background: #217346;
  color: #fff;
}

.tabs button {
  padding: 0 12px 2px;
}

.tabs .file {
  width: 61px;
  padding-right: 16px;
}

.tabs .active {
  background: #f3f3f3;
  color: #217346;
  width: 58px;
  margin-right: 1px;
}

.tabs .tell {
  gap: 12px;
  padding-left: 18px;
}

.tabs .comment {
  margin-left: auto;
  padding-right: 15px;
}

/* ribbon */
.ribbon {
  display: flex;
  height: 93px;
  padding: 4px 0;
  background: #f3f3f3;
  border-bottom: 1px solid #d2d2d2;
}

.group {
  display: flex;
  flex-direction: column;
  flex: none;
  border-right: 1px solid #919191;
}

.clipboard {
  width: 165px;
}

.font {
  width: 232px;
}

.alignment {
  width: 280px;
}

.number {
  width: 156px;
}

.styles {
  width: 594px;
}

.cells {
  width: 143px;
}

.editing {
  width: 200px;
}

.addins {
  width: 63px;
}

.tools {
  display: flex;
  height: 70px;
  padding-left: 8px;
}

.styles .tools,
.editing .tools {
  padding-left: 11px;
}

.addins .tools {
  padding-left: 0;
}

.caption-row {
  position: relative;
  height: 15px;
  line-height: 22px;
  text-align: center;
}

.launch {
  padding-right: 17px;
}

.caption-row button {
  position: absolute;
  right: 2px;
  top: 8px;
}

.big {
  flex-direction: column;
  justify-content: flex-start;
  width: 42px;
  padding-top: 3px;
  line-height: 16px;
}

.big span {
  margin-top: 3px;
}

.big > svg:last-child {
  margin-top: 5px;
}

.w66 {
  width: 66px;
}

.w42 {
  width: 42px;
}

.w44 {
  width: 44px;
}

.w62 {
  width: 62px;
}

.stack {
  margin-top: -1px;
}

.stack button {
  height: 23px;
  gap: 4px;
}

.clipboard .stack {
  padding-left: 3px;
}

.stack .gap {
  margin-left: 5px;
}

.editing .stack {
  width: 90px;
}

.rows {
  flex-direction: column;
  padding-top: 7px;
  gap: 7px;
}

.row {
  display: flex;
  align-items: center;
  height: 23px;
}

.letters {
  margin-left: -2px;
}

.ic {
  width: 24px;
  height: 22px;
}

.dd {
  width: 12px;
  height: 22px;
}

.sep {
  width: 1px;
  height: 30px;
  margin: 0 3px;
  background: #d4d4d4;
}

.combo {
  position: relative;
  height: 23px;
  border: 1px solid #ababab;
  background: #fff;
}

.combo select {
  width: 100%;
  height: 100%;
  padding: 0 2px;
  appearance: none;
}

.combo::after {
  content: "";
  position: absolute;
  right: 4px;
  top: 9px;
  border: 3px solid transparent;
  border-top-color: #555;
  border-bottom: none;
}

.wide {
  width: 123px;
}

.small {
  width: 43px;
  margin-left: 2px;
}

.full {
  width: 140px;
}

.grow,
.shrink {
  align-items: flex-start;
  color: #555;
  font-size: 15px;
  line-height: 22px;
  margin-left: 3px;
}

.shrink {
  font-size: 12px;
  margin-left: 1px;
}

.letter {
  font-size: 13px;
  color: #444;
}

.letter i {
  font-family: "Liberation Serif", serif;
  font-size: 14px;
  font-weight: bold;
}

.letter u {
  font-weight: 600;
}

.font .sep {
  margin: 0 5px;
}

.font .dd + .ic {
  margin-left: 2px;
}

.fcolor span {
  width: 16px;
  border-bottom: 4px solid #e01616;
  color: #555;
  font-size: 14px;
  font-weight: 600;
  line-height: 14px;
}

.pressed {
  background: #c8c8c8;
  border: 1px solid #888;
}

.alignment .pressed {
  width: 22px;
  height: 23px;
  margin: 0 1px;
}

.alignment .tools {
  padding-left: 7px;
}

.sep.late {
  margin-left: 15px;
}

.wrap {
  gap: 3px;
  padding-left: 4px;
}

.wrap .gap {
  margin-left: 5px;
}

.number .dd {
  margin-right: 4px;
}

.number .sep {
  margin: 0 1px 0 3px;
}

.percent {
  color: #444;
  font-size: 15px;
}

.ab {
  font-family: "Liberation Sans", sans-serif;
  font-size: 9px;
  fill: #444;
}

.az {
  font-family: "Liberation Sans", sans-serif;
  font-size: 14px;
  font-weight: bold;
}

.dec {
  font-family: "Liberation Sans", sans-serif;
  font-size: 8px;
  fill: #333;
}

/* style gallery */
.gallery {
  display: flex;
  height: 62px;
  margin-top: 2px;
  border: 1px solid #d0d0d0;
  background: #fff;
}

.swatches {
  display: grid;
  grid-template-columns: repeat(4, 100px);
  grid-auto-rows: 22px;
  gap: 6px;
  padding: 5px 3px;
  font-family: Lato, sans-serif;
  font-size: 14px;
}

.swatches button {
  justify-content: flex-start;
  padding: 0 0 2px 4px;
}

.swatches .normal {
  color: #000;
  background: #fff;
  outline: 2px solid #b0b0b0;
  outline-offset: 1px;
}

.bad {
  background: #ffc7ce;
  color: #9c0006;
}

.good {
  background: #c6efce;
  color: #006100;
}

.neutral {
  background: #ffeb9c;
  color: #9c6500;
}

.calc {
  background: #f2f2f2;
  border: 1px solid #7f7f7f;
  color: #e08226;
  font-weight: bold;
}

.check {
  background: #a5a5a5;
  border: 3px double #3f3f3f;
  color: #fff;
  font-weight: bold;
}

.expl {
  color: #7f7f7f;
  font-style: italic;
}

.swatches .input {
  background: #ffcc99;
  border: 1px solid #7f7f7f;
  color: #3f3f76;
}

.swatches .check {
  padding-left: 1px;
}

.spin {
  display: grid;
  grid-template-rows: repeat(3, 1fr);
  width: 15px;
  border-left: 1px solid #c6c6c6;
}

.spin button + button {
  border-top: 1px solid #c6c6c6;
}

.spin .off {
  background: #e1e1e1;
  opacity: 0.6;
}

.spin .more {
  flex-direction: column;
  gap: 2px;
}

.spin .more::before {
  content: "";
  width: 6px;
  height: 1px;
  background: #555;
}

.tri {
  border: 3px solid transparent;
  border-top: 3px solid #555;
  border-bottom: none;
}

.tri.up {
  border-top: none;
  border-bottom: 3px solid #555;
}

.tri.left {
  border: 4px solid transparent;
  border-right-color: #222;
  border-left: none;
}

.tri.right {
  border: 4px solid transparent;
  border-left-color: #222;
  border-right: none;
}

.collapse {
  align-self: flex-end;
  margin: 0 9px 0 auto;
}

/* formula bar */
.formulabar {
  display: flex;
  height: 44px;
  padding: 10px 5px 9px;
}

.namebox,
.fx,
.formula {
  display: flex;
  align-items: center;
  border: 1px solid #c8c8c8;
  background: #fff;
}

.namebox {
  width: 102px;
  padding-right: 7px;
}

.namebox input {
  width: 86px;
  padding-left: 6px;
  color: #444;
}

.namebox .tri {
  border-width: 4px;
  border-bottom: none;
  border-top-color: #777;
}

.dots {
  width: 3px;
  height: 12px;
  margin: 6px 13px 0 14px;
  background: radial-gradient(circle, #aaa 1px, transparent 1px) 0 0 / 3px 4px;
}

.fx {
  width: 110px;
}

.fx button {
  width: 36px;
}

.fn {
  font: bold 16px "Liberation Serif", serif;
  color: #555;
}

.fn small {
  font-size: 12px;
}

.formula {
  flex: 1;
  margin-left: 3px;
  padding-right: 4px;
  color: #444;
}

.formula input {
  flex: 1;
  padding-left: 11px;
}

/* worksheet */
.sheet {
  display: flex;
  flex: 1;
  min-height: 0;
}

.viewport {
  flex: 1;
  overflow: hidden;
  border-right: 1px solid #9b9b9b;
  border-bottom: 1px solid #8f8f8f;
}

table {
  width: 100%;
  table-layout: fixed;
  border-spacing: 0;
  background: #fff;
}

.c-head { width: 26px; }
.c-a { width: 106px; }
.c-b { width: 341px; }
.c-c { width: 309px; }
.c-d { width: 109px; }
.c-f { width: 68px; }
.c-g { width: 67px; }
.c-x { width: 64px; }

th,
td {
  padding: 0;
}

th {
  background: #e6e6e6;
  font-weight: 400;
  font-size: 12px;
}

thead th {
  height: 22px;
  line-height: 21px;
  box-shadow: inset -1px 0 0 #b8b8b8, inset 0 -1px 0 #9b9b9b;
}

thead .corner {
  background: linear-gradient(135deg, transparent 50%, #b4b4b4 50%) 11px 7px / 11px 11px no-repeat #e6e6e6;
}

thead .sel {
  background: #d2d2d2;
  color: #217346;
  box-shadow: inset 0 -2px 0 #217346;
}

tbody th {
  vertical-align: bottom;
  line-height: 17px;
  box-shadow: inset -1px 0 0 #9b9b9b, inset 0 -1px 0 #c6c6c6;
}

tbody th.sel {
  background: #d2d2d2;
  color: #217346;
  box-shadow: inset -2px 0 0 #217346;
}

td {
  font-family: "Liberation Sans", Arial, sans-serif;
  font-size: 12px;
  line-height: 16px;
  white-space: nowrap;
  color: #111;
  box-shadow: inset -1px -1px 0 #d0d0d0;
}

td:nth-child(-n + 8) {
  box-shadow: inset -1px -1px 0 #000;
}

td:nth-child(2) {
  padding-left: 20px;
}

td:nth-child(3),
td:nth-child(5),
td:nth-child(6) {
  padding-left: 11px;
}

td:nth-child(8) {
  position: relative;
  padding-right: 3px;
  text-align: right;
  vertical-align: bottom;
  font-family: "Open Sans", sans-serif;
  line-height: 17px;
}

.head td:nth-child(n) {
  padding: 0 0 2px;
  text-align: center;
  vertical-align: middle;
  font-family: Lato, sans-serif;
  font-size: 14px;
  line-height: 20px;
}

.head { height: 121px; }
.l3 { height: 48px; }
.l4 { height: 64px; }
.l5 { height: 80px; }
.l6 { height: 96px; }
.l10 { height: 160px; }

.top {
  vertical-align: top;
}

.cursor::before {
  content: "";
  position: absolute;
  inset: -2px -1px -1px -2px;
  border: 2px solid #217346;
}

.cursor::after {
  content: "";
  position: absolute;
  right: -3px;
  bottom: -3px;
  width: 7px;
  height: 7px;
  border: 1px solid #fff;
  background: #217346;
}

.vscroll {
  display: flex;
  flex-direction: column;
  width: 21px;
  padding: 4px 3px 0 3px;
}

.vscroll button,
.vscroll .thumb,
.hscroll button,
.hscroll .thumb {
  width: 15px;
  height: 15px;
  border: 1px solid #9b9b9b;
  background: #fff;
}

.vscroll .thumb {
  height: 17px;
}

.vscroll .end {
  margin-top: auto;
}

.vscroll .tri {
  border-width: 4px;
  border-top-color: #222;
  border-bottom: none;
}

.vscroll .tri.up {
  border: 4px solid transparent;
  border-bottom-color: #222;
  border-top: none;
}

/* sheet tabs */
.sheetbar {
  display: flex;
  align-items: flex-start;
  height: 28px;
  padding-left: 16px;
  border-bottom: 1px solid #c6c6c6;
}

.arrow {
  width: 28px;
  height: 26px;
  opacity: 0.25;
}

.sheettab {
  width: 65px;
  height: 25px;
  margin: 0 32px 0 28px;
  background: #fff;
  border-bottom: 2px solid #217346;
  color: #217346;
  font-weight: bold;
}

.new {
  height: 27px;
}

.sheetbar .dots {
  margin: 8px 13px 0 auto;
}

.hscroll {
  display: flex;
  width: 730px;
  margin: 7px 21px 0 0;
  background: #f0f0f0;
}

.hscroll .thumb {
  width: 662px;
  margin-right: auto;
}

/* status bar */
.status {
  display: flex;
  align-items: center;
  height: 22px;
  padding-left: 11px;
  background: #f3f3f3;
  font-size: 11px;
}

.access {
  gap: 1px;
  margin-left: 18px;
}

.views {
  display: flex;
  margin-left: auto;
}

.views button {
  width: 40px;
  height: 22px;
}

.views .on {
  background: #c8c8c8;
}

.zoom {
  display: flex;
  align-items: center;
  margin-left: 6px;
  padding-right: 8px;
}

.zoom input {
  width: 100px;
  height: 12px;
  margin: 0 5px;
  appearance: none;
  background: linear-gradient(#333, #333) center / 100% 1px no-repeat;
}

.zoom input::-webkit-slider-thumb {
  appearance: none;
  width: 5px;
  height: 11px;
  background: #444;
}

.zoom span {
  margin-left: 12px;
}

/* taskbar */
.taskbar {
  display: flex;
  height: 40px;
  background: linear-gradient(90deg, #20363f 50%, #474747 56%, #474747 92%, #1c2c50 98%);
  color: #fff;
}

.start {
  width: 48px;
}

.search {
  display: flex;
  align-items: center;
  width: 288px;
  padding-left: 12px;
  background: #f2f2f2;
  border-bottom: 1px solid #8a8a8a;
}

.search input {
  flex: 1;
  min-width: 0;
  padding-left: 11px;
  font-size: 14px;
}

.search input::placeholder {
  color: #333;
  opacity: 1;
}

.apps {
  display: flex;
  gap: 1px;
  margin-left: 3px;
}

.apps button {
  width: 48px;
  height: 40px;
}

.apps .run {
  background: linear-gradient(#76b9ed, #76b9ed) center bottom / 40px 2px no-repeat;
}

.apps .current {
  background: #4f626b;
  border-bottom: 2px solid #76b9ed;
}

.pdf {
  font: bold 9px "Liberation Serif", serif;
}

.zm {
  font-size: 12px;
  font-weight: bold;
  fill: #fff;
}

.nn {
  font-size: 11px;
  fill: #fff;
}

.xx {
  font-size: 11px;
  font-weight: bold;
  fill: #fff;
}

.tray {
  display: flex;
  margin-left: auto;
  padding-right: 4px;
}

.tray button {
  width: 24px;
  line-height: 18px;
}

.tray .lang {
  width: 34px;
}

.tray .clock {
  width: 74px;
}

.tray .notes {
  width: 48px;
  border-right: 1px solid #6c7688;
}
```
